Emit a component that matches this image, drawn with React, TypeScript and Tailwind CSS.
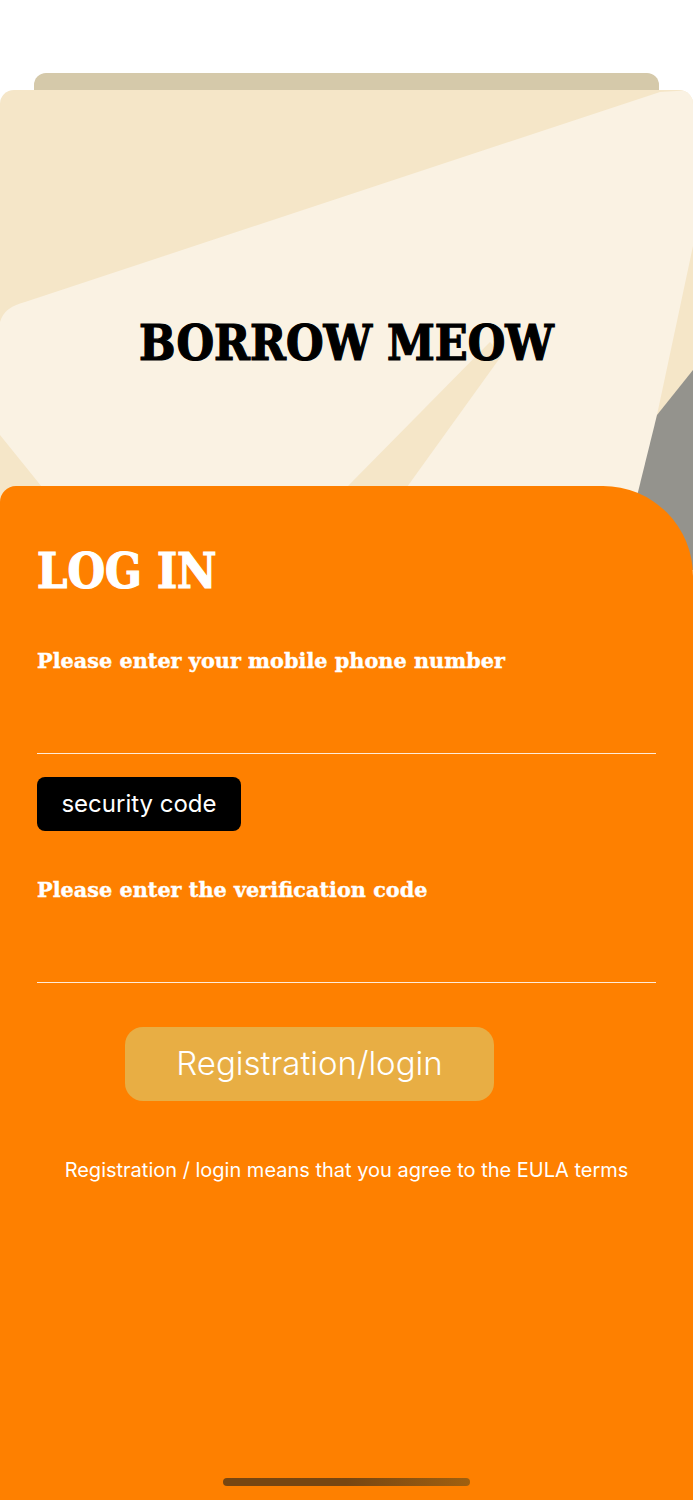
/**
 * BorrowMeow login screen
 */
const slab = { fontFamily: '"DejaVu Serif", "Liberation Serif", serif' };
const sans = { fontFamily: 'Inter, "Noto Sans", sans-serif' };

function CardArt() {
  // decorative background of the header card (card coords, 693 x 480)
  return (
    <svg
      className="absolute inset-0 h-full w-full"
      viewBox="0 0 693 480"
      preserveAspectRatio="none"
      aria-hidden="true"
    >
      <rect x="0" y="0" width="693" height="480" fill="#f5e6c8" />
      <path
        d="M660 2 L693 0 L693 156 L657 325 L630 480 L109 480 L0 345 L0 232 Q4 217 25 212 Z"
        fill="#faf2e3"
      />
      <path d="M347 397 L407 397 L502 265 L490 252 Z" fill="#f5e6c8" />
      <path d="M347 397 L407 397 L350 480 L262 480 Z" fill="#f5e6c8" />
      <path d="M693 280 L657 325 L638 402 L620 480 L693 480 Z" fill="#94938d" />
    </svg>
  );
}

function Field({ label, mt }: { label: string; mt: string }) {
  return (
    <div className={mt}>
      <p
        style={slab}
        className="text-[20.8px] leading-[24px] font-bold text-white [-webkit-text-stroke:0.4px_white]"
      >
        {label}
      </p>
      <div className="h-[81px] border-b border-white/85" />
    </div>
  );
}

export default function App() {
  return (
    <div className="w-[693px] h-[1500px] overflow-hidden bg-white">
      <div className="pt-[73px]">
        <div className="mx-[34px] h-[17px] rounded-t-[12px] bg-[#d5c9aa]" />
      </div>

      {/* Header card */}
      <div className="relative h-[480px] overflow-hidden rounded-t-[14px]">
        <CardArt />
        <h1
          style={slab}
          className="relative pt-[229px] text-center text-[48px] leading-[48px] font-bold font-stretch-condensed text-black [-webkit-text-stroke:1.2px_black]"
        >
          BORROW MEOW
        </h1>
      </div>

      {/* Login panel */}
      <div className="relative z-10 -mt-[84px] flex h-[1014px] flex-col rounded-tl-[16px] rounded-tr-[90px] bg-[#fe8000] px-[37px]">
        <h2
          style={slab}
          className="pt-[61px] text-[48px] leading-[48px] font-bold font-stretch-condensed text-white [-webkit-text-stroke:1.2px_white]"
        >
          LOG IN
        </h2>

        <Field label="Please enter your mobile phone number" mt="mt-[54px]" />

        <button
          style={sans}
          className="mt-[23px] flex h-[54px] w-[204px] items-center justify-center rounded-[8px] bg-black text-[24px] text-white"
        >
          security code
        </button>

        <Field label="Please enter the verification code" mt="mt-[47px]" />

        <button
          style={sans}
          className="ml-[88px] mt-[44px] flex h-[74px] w-[369px] items-center justify-center rounded-[18px] bg-[#e8ae44] text-[33px] font-light text-white"
        >
          Registration/login
        </button>

        <p style={sans} className="mt-[57px] text-center text-[20px] leading-[24px] text-white">
          Registration / login means that you agree to the EULA terms
        </p>

        <div className="mt-auto mb-[14px] h-[8px] w-[247px] self-center rounded-full bg-gradient-to-r from-[#774611] via-[#774611] to-[#a0600f]" />
      </div>
    </div>
  );
}
